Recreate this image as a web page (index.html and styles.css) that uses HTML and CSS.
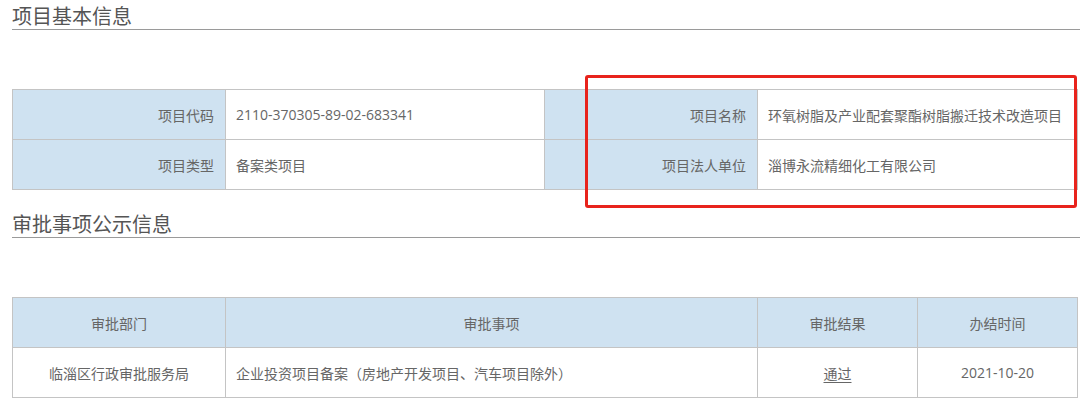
FILE: index.html
```html
<!DOCTYPE html>
<html lang="zh">
<head>
<meta charset="utf-8">
<title>项目基本信息</title>
<link rel="stylesheet" href="styles.css">
</head>
<body>
<div class="page">
  <h2 class="section-title">项目基本信息</h2>
  <table class="info-table">
    <colgroup><col class="c-label"><col class="c-val1"><col class="c-label"><col class="c-val2"></colgroup>
    <tr>
      <th>项目代码</th><td>2110-370305-89-02-683341</td>
      <th>项目名称</th><td>环氧树脂及产业配套聚酯树脂搬迁技术改造项目</td>
    </tr>
    <tr>
      <th>项目类型</th><td>备案类项目</td>
      <th>项目法人单位</th><td>淄博永流精细化工有限公司</td>
    </tr>
  </table>
  <h2 class="section-title second">审批事项公示信息</h2>
  <table class="approve-table">
    <colgroup><col class="a1"><col class="a2"><col class="a3"><col class="a4"></colgroup>
    <tr>
      <th>审批部门</th><th>审批事项</th><th>审批结果</th><th>办结时间</th>
    </tr>
    <tr>
      <td>临淄区行政审批服务局</td>
      <td class="left">企业投资项目备案（房地产开发项目、汽车项目除外）</td>
      <td><span class="link">通过</span></td>
      <td>2021-10-20</td>
    </tr>
  </table>
  <div class="highlight"></div>
</div>
</body>
</html>
```
FILE: styles.css
```css
html, body {
  margin: 0;
  padding: 0;
  background: #ffffff;
}
.page {
  position: relative;
  padding-left: 12px;
  font-family: "Open Sans", "Noto Sans CJK SC", sans-serif;
  color: #666;
  width: 1068px;
  height: 402px;
}
.section-title {
  margin: 0 0 59px 0;
  padding-top: 3px;
  font-size: 20px;
  line-height: 26px;
  font-weight: normal;
  color: #555;
  border-bottom: 1px solid #9a9a9a;
  font-family: "Noto Sans CJK SC", sans-serif;
}
.section-title.second {
  margin-top: 18px;
  margin-bottom: 59px;
}
table {
  border-collapse: collapse;
  table-layout: fixed;
  width: 1065px;
  font-size: 14px;
}
th, td {
  border: 1px solid #c4c4c4;
  height: 49px;
  padding: 0 10px;
  font-weight: normal;
  color: #666;
  white-space: nowrap;
}
th {
  background: #cfe2f1;
}
.info-table th {
  text-align: right;
  padding-right: 11px;
}
.info-table td {
  text-align: left;
}
.c-label { width: 213px; }
.c-val1 { width: 319px; }
.c-val2 { width: 320px; }
.approve-table th, .approve-table td {
  text-align: center;
}
.approve-table td.left {
  text-align: left;
}
.a1 { width: 213px; }
.a2 { width: 532px; }
.a3 { width: 160px; }
.a4 { width: 160px; }
.link {
  text-decoration: underline;
  text-underline-offset: 3px;
}
.highlight {
  position: absolute;
  left: 585px;
  top: 75px;
  width: 486px;
  height: 127px;
  border: 3px solid #e8231c;
  border-radius: 3px;
}
```
